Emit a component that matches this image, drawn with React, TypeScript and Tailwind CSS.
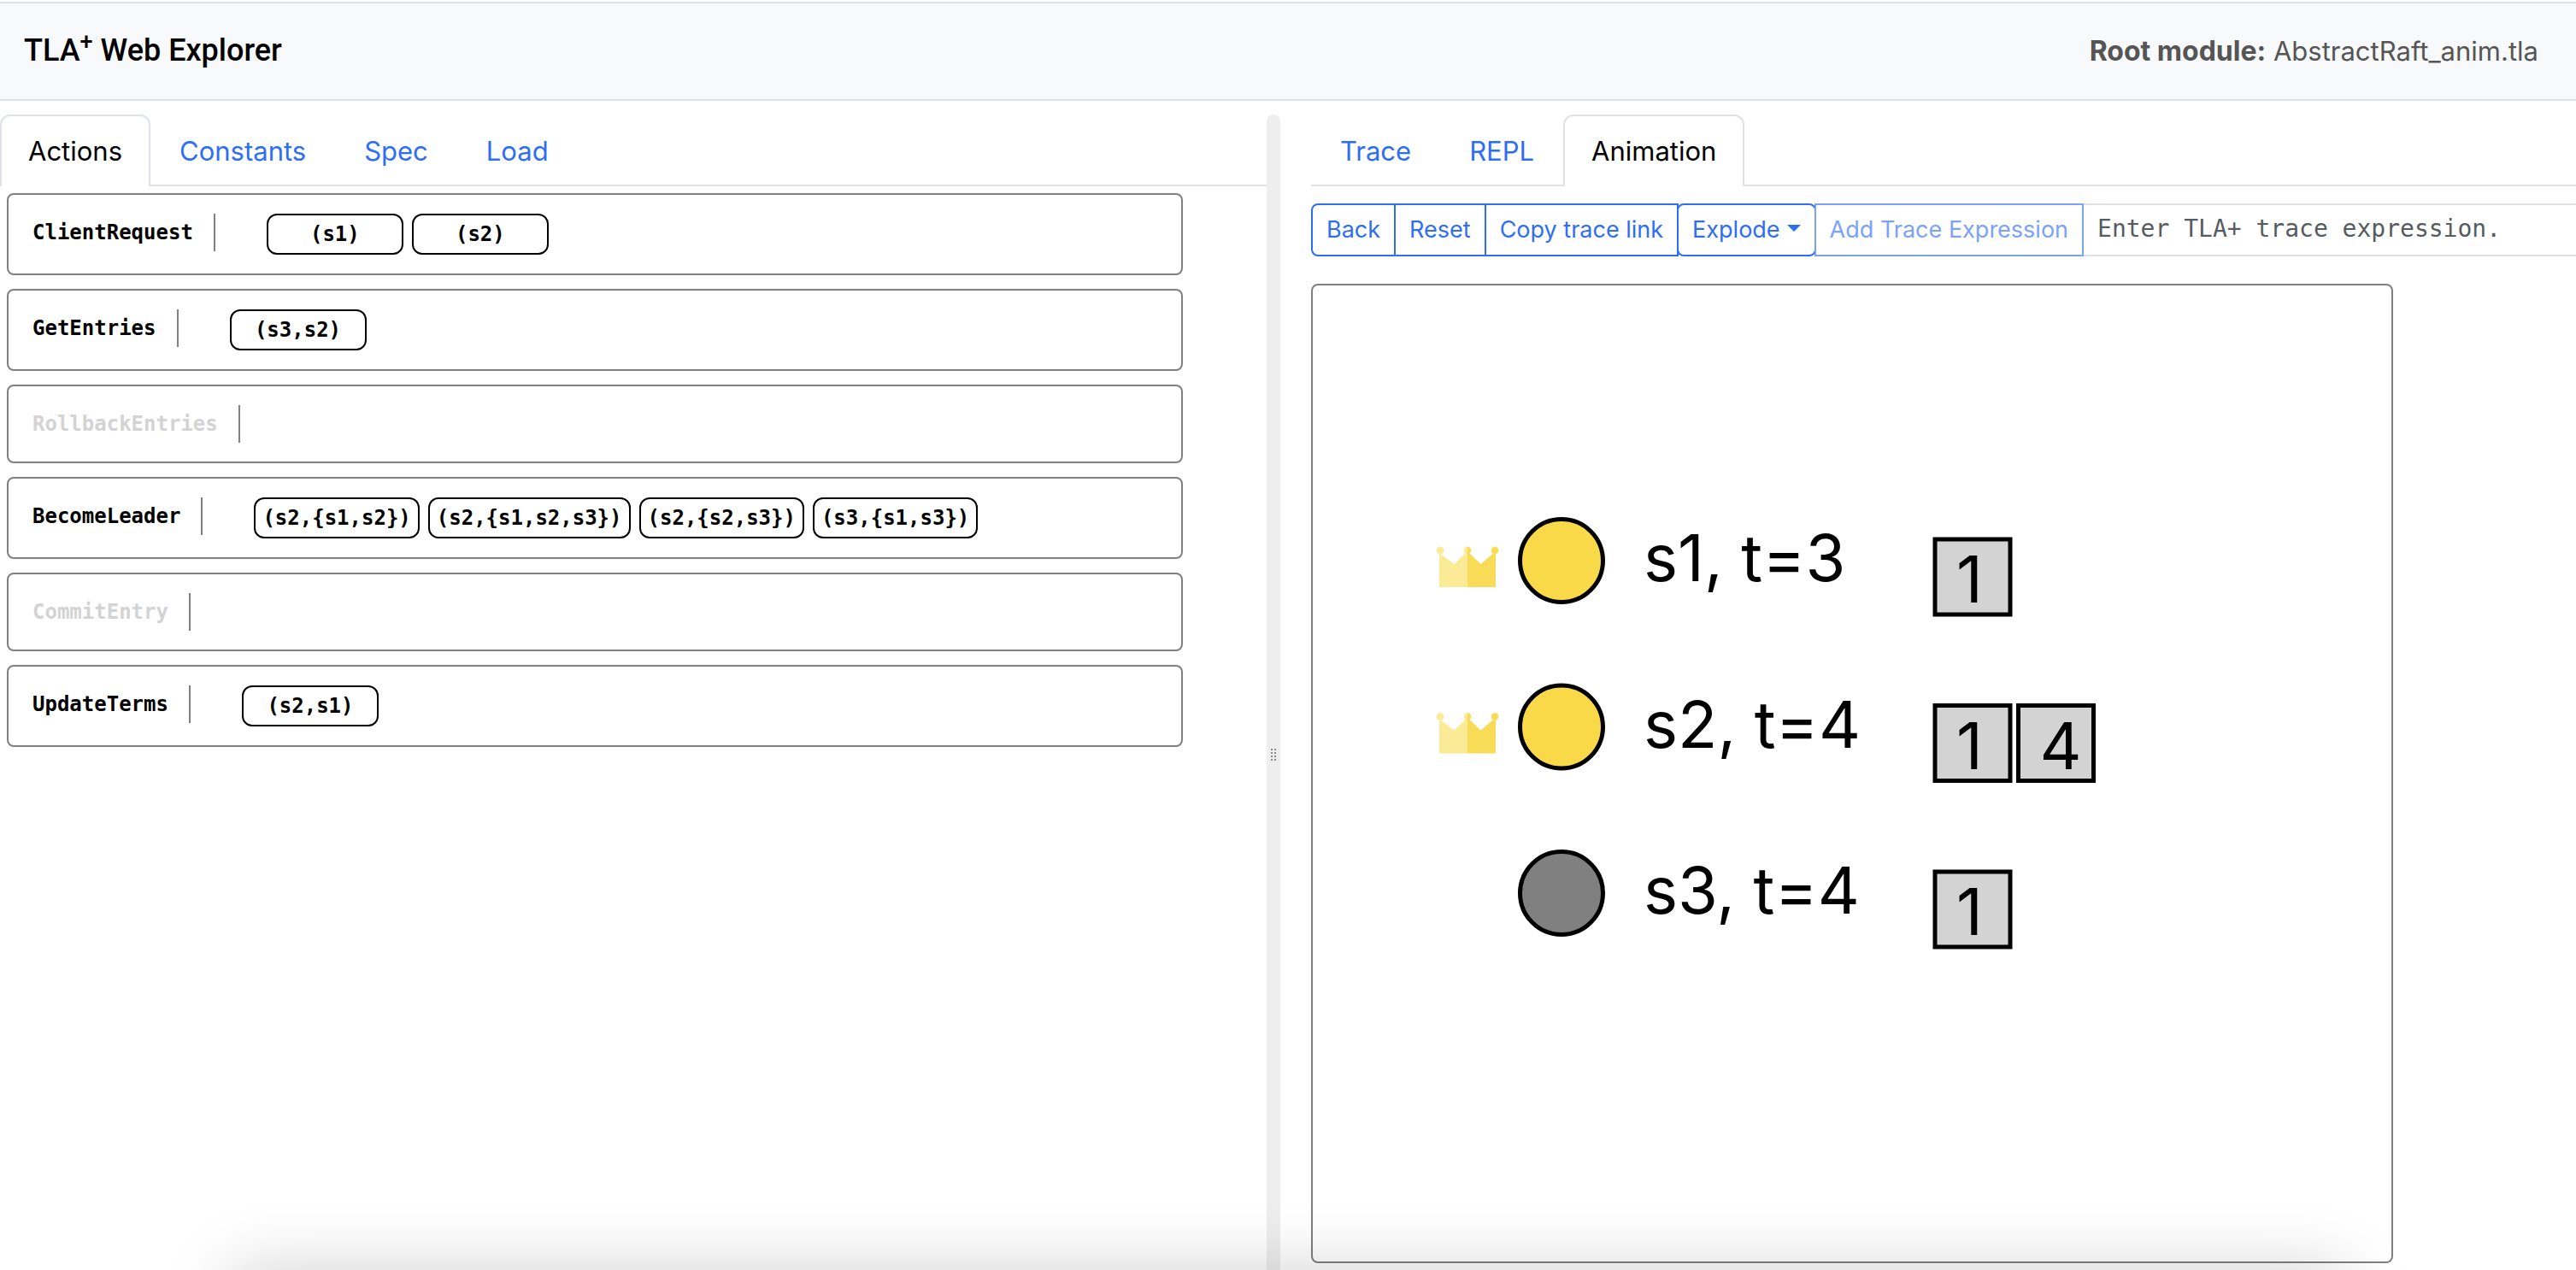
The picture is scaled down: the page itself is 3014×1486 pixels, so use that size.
type Action = { name: string; params: string[] };

const actions: Action[] = [
  { name: "ClientRequest", params: ["(s1)", "(s2)"] },
  { name: "GetEntries", params: ["(s3,s2)"] },
  { name: "RollbackEntries", params: [] },
  { name: "BecomeLeader", params: ["(s2,{s1,s2})", "(s2,{s1,s2,s3})", "(s2,{s2,s3})", "(s3,{s1,s3})"] },
  { name: "CommitEntry", params: [] },
  { name: "UpdateTerms", params: ["(s2,s1)"] },
];

const servers = [
  { label: "s1, t=3", leader: true, log: ["1"] },
  { label: "s2, t=4", leader: true, log: ["1", "4"] },
  { label: "s3, t=4", leader: false, log: ["1"] },
];

function Tabs({ tabs, active }: { tabs: string[]; active: string }) {
  return (
    <div role="tablist" className="flex h-[84px] text-[31px] leading-[48px]">
      {tabs.map((tab) => (
        <button
          key={tab}
          type="button"
          role="tab"
          aria-selected={tab === active}
          className={
            tab === active
              ? "rounded-t-xl border-2 border-b-0 border-[#dee2e6] px-[31px] py-0.5 text-black"
              : "border-y-2 border-t-transparent border-b-[#dee2e6] px-[34px] pt-0.5 text-[#2e6df6]"
          }
        >
          {tab}
        </button>
      ))}
      <div className="grow border-b-2 border-[#dee2e6]" />
    </div>
  );
}

function ActionCard({ name, params }: Action) {
  return (
    <section className="flex max-w-[1376px] items-start rounded-lg border-2 border-[#808080] py-[22px] pl-7 font-['DejaVu_Sans_Mono',monospace] text-2xl font-bold">
      <h2
        className={
          params.length
            ? "border-r-2 border-[#808080] pr-6 leading-[44px] text-black"
            : "border-r-2 border-[#808080] pr-6 leading-[44px] text-[#d3d3d3]"
        }
      >
        {name}
      </h2>
      {params.length > 0 && (
        <div className="ml-[60px] flex gap-2.5">
          {params.map((p) => (
            <button
              key={p}
              type="button"
              className="h-12 min-w-40 rounded-xl border-2 border-black px-2 text-black"
            >
              {p}
            </button>
          ))}
        </div>
      )}
    </section>
  );
}

function Gutter() {
  return (
    <div className="flex w-4 shrink-0 justify-center rounded-t-lg bg-[#eeeeee] pt-[742px]" role="separator" aria-orientation="vertical">
      <svg width="6" height="14" viewBox="0 0 6 14" fill="#888888" aria-hidden="true">
        {[0, 4, 8, 12].map((y) => (
          <path key={y} d={`M0 ${y}h2v2h-2zM4 ${y}h2v2h-2z`} />
        ))}
      </svg>
    </div>
  );
}

function Crown() {
  return (
    <g>
      <g fill="#fbea96">
        <path d="M0 7L17.500 20L33 5V47H0Z" />
        <circle cx="1" cy="4" r="4.400" />
        <path d="M33 -0.400A4.400 4.400 0 0 0 33 8.400Z" />
      </g>
      <g fill="#f8dc58">
        <path d="M33 5L48.500 20L66 5V47H33Z" />
        <circle cx="65" cy="4" r="4.400" />
        <path d="M33 -0.400A4.400 4.400 0 0 1 33 8.400Z" />
      </g>
    </g>
  );
}

function Animation() {
  return (
    <svg viewBox="0 0 1262 1142" className="block w-full font-['Inter',sans-serif] text-[76px]" role="img" aria-label="Raft servers">
      {servers.map((s, i) => (
        <g key={s.label} transform={`translate(0 ${322 + i * 194.5})`}>
          {s.leader && (
            <g transform="translate(148 -16)">
              <Crown />
            </g>
          )}
          <circle cx="291" cy="0" r="48.500" strokeWidth="5" stroke="black" fill={s.leader ? "#fad949" : "#808080"} />
          <text x="387" y="24">{s.label}</text>
          {s.log.map((term, j) => (
            <g key={j} transform={`translate(${728 + j * 97.5} -25)`}>
              <rect x="0" y="0" width="88" height="88" fill="#d3d3d3" stroke="black" strokeWidth="5" />
              <text x="25" y="74">{term}</text>
            </g>
          ))}
        </g>
      ))}
    </svg>
  );
}

const toolBtn = "-ml-0.5 border-2 border-[#2e6df6] px-4 whitespace-nowrap text-[#2e6df6]";

export default function App() {
  return (
    <div className="relative flex h-screen flex-col overflow-hidden bg-white pt-0.5 font-['Inter',sans-serif]">
      <header className="flex h-[116px] shrink-0 items-center justify-between border-y-2 border-[#dee2e6] bg-[#f8f9fb] pr-11 pl-7">
        <h1 className="pb-0.5 font-['Roboto',sans-serif] text-4xl font-medium text-black">
          TLA<sup className="text-[27px]">+</sup> Web Explorer
        </h1>
        <p className="text-[31px] text-[#555555]">
          <strong className="text-[32px] font-bold">Root module:</strong> AbstractRaft_anim.tla
        </p>
      </header>

      <main className="flex min-h-0 grow pt-4">
        <div className="min-w-0 flex-[1482]">
          <Tabs tabs={["Actions", "Constants", "Spec", "Load"]} active="Actions" />
          <div className="flex flex-col gap-4 px-2 pt-2">
            {actions.map((a) => (
              <ActionCard key={a.name} {...a} />
            ))}
          </div>
        </div>

        <Gutter />

        <div className="min-w-0 flex-[1480] overflow-hidden pl-9">
          <Tabs tabs={["Trace", "REPL", "Animation"]} active="Animation" />
          <div className="mt-5 -mr-1 flex h-[62px] pl-0.5 text-[27px]">
            <button type="button" className={`${toolBtn} rounded-l-lg`}>Back</button>
            <button type="button" className={toolBtn}>Reset</button>
            <button type="button" className={toolBtn}>Copy trace link</button>
            <button type="button" aria-haspopup="menu" className={`${toolBtn} flex items-center gap-2 rounded-lg`}>
              Explode
              <svg width="16" height="8" viewBox="0 0 16 8" fill="#2e6df6" className="mb-1" aria-hidden="true">
                <path d="M0 0H16L8 8Z" />
              </svg>
            </button>
            <button type="button" disabled className="-ml-0.5 border-2 border-[#7ba2f9] px-4 whitespace-nowrap text-[#7ba2f9]">
              Add Trace Expression
            </button>
            <input
              type="text"
              aria-label="Trace expression"
              placeholder="Enter TLA+ trace expression."
              className="min-w-0 grow border-y-2 border-[#dee2e6] px-4 pb-0.5 font-['DejaVu_Sans_Mono',monospace] text-[28px] text-black placeholder:text-[#555b60]"
            />
          </div>
          <div className="mt-8 max-w-[1266px] rounded-lg border-2 border-[#808080]">
            <Animation />
          </div>
        </div>
      </main>

      <div className="pointer-events-none absolute top-full right-[270px] left-[270px] h-40 shadow-[0_0_80px_rgba(0,0,0,0.18)]" />
    </div>
  );
}
